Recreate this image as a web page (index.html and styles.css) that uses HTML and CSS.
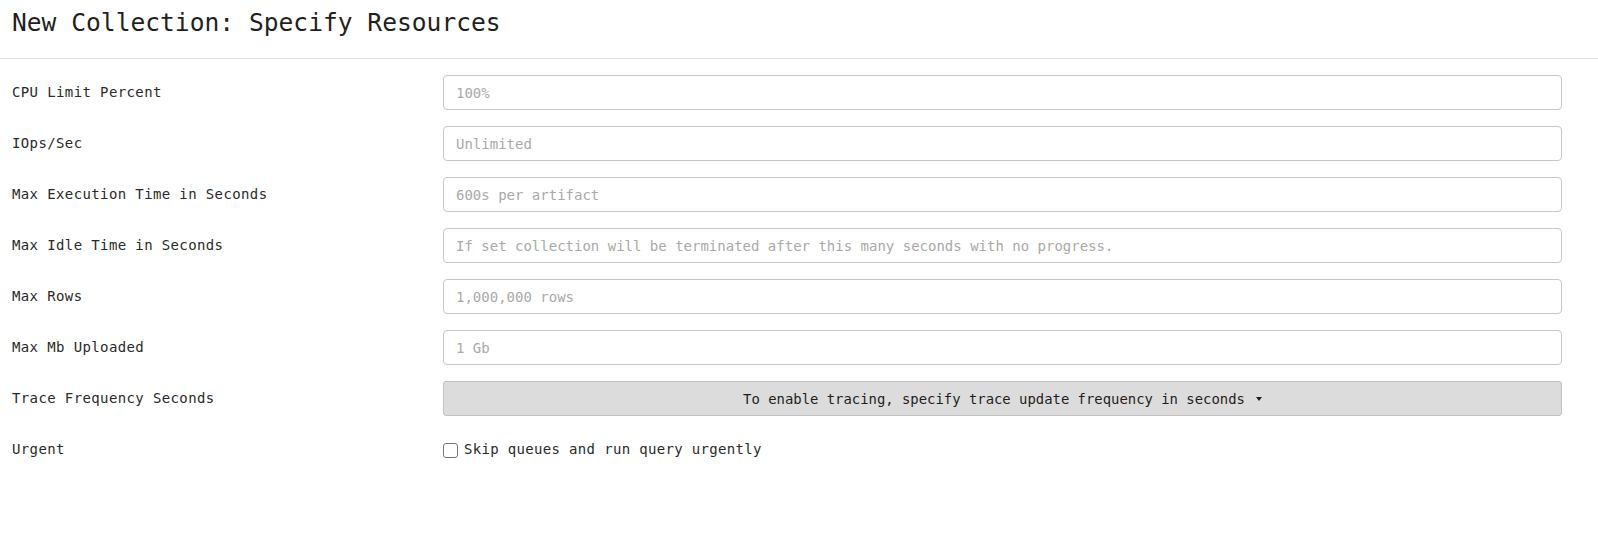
FILE: index.html
```html
<!DOCTYPE html>
<html>
<head>
<meta charset="utf-8">
<title>New Collection: Specify Resources</title>
<link rel="stylesheet" href="styles.css">
</head>
<body>
<div class="header">
  <h3 class="title">New Collection: Specify Resources</h3>
</div>
<form class="form">
  <div class="row">
    <label class="label">CPU Limit Percent</label>
    <input class="control" type="text" placeholder="100%">
  </div>
  <div class="row">
    <label class="label">IOps/Sec</label>
    <input class="control" type="text" placeholder="Unlimited">
  </div>
  <div class="row">
    <label class="label">Max Execution Time in Seconds</label>
    <input class="control" type="text" placeholder="600s per artifact">
  </div>
  <div class="row">
    <label class="label">Max Idle Time in Seconds</label>
    <input class="control" type="text" placeholder="If set collection will be terminated after this many seconds with no progress.">
  </div>
  <div class="row">
    <label class="label">Max Rows</label>
    <input class="control" type="text" placeholder="1,000,000 rows">
  </div>
  <div class="row">
    <label class="label">Max Mb Uploaded</label>
    <input class="control" type="text" placeholder="1 Gb">
  </div>
  <div class="row">
    <label class="label">Trace Frequency Seconds</label>
    <button class="dropdown" type="button">To enable tracing, specify trace update frequency in seconds<span class="caret"></span></button>
  </div>
  <div class="row">
    <label class="label">Urgent</label>
    <label class="check">
      <input class="checkbox" type="checkbox">
      <span class="check-text">Skip queues and run query urgently</span>
    </label>
  </div>
</form>
</body>
</html>
```

FILE: styles.css
```css
html, body {
  margin: 0;
  padding: 0;
  background: #ffffff;
}

body {
  font-family: "DejaVu Sans Mono", "Liberation Mono", monospace;
  color: #212529;
}

.header {
  box-sizing: border-box;
  height: 59px;
  border-bottom: 1px solid #dee2e6;
  padding: 8px 12px 0 12px;
}

.title {
  margin: 0;
  font-size: 24.6px;
  font-weight: normal;
  line-height: 29px;
  color: #1f1f1f;
}

.form {
  padding: 16px 36px 0 12px;
  margin: 0;
}

.row {
  display: grid;
  grid-template-columns: 431px 1fr;
  align-items: center;
  height: 35px;
  margin-bottom: 16px;
}

.label {
  font-size: 14px;
  letter-spacing: 0.38px;
  color: #2a2a2a;
  padding-bottom: 2px;
}

.control {
  box-sizing: border-box;
  height: 35px;
  width: 100%;
  margin: 0;
  padding: 0 12px;
  border: 1px solid #c8c8c8;
  border-radius: 4px;
  font-family: "DejaVu Sans Mono", "Liberation Mono", monospace;
  font-size: 14px;
  color: #212529;
  background: #fff;
  outline: none;
}

.control::placeholder {
  color: #a9a9a9;
}

.dropdown {
  box-sizing: border-box;
  height: 35px;
  width: 100%;
  margin: 0;
  padding: 0 12px;
  border: 1px solid #c2c2c2;
  border-radius: 3px;
  background: #dcdcdc;
  font-family: "DejaVu Sans Mono", "Liberation Mono", monospace;
  font-size: 13.9px;
  color: #1e1e1e;
  display: flex;
  align-items: center;
  justify-content: center;
}

.caret {
  display: inline-block;
  width: 0;
  height: 0;
  margin-left: 11px;
  border-top: 4px solid #1e1e1e;
  border-left: 3.5px solid transparent;
  border-right: 3.5px solid transparent;
}

.check {
  display: flex;
  align-items: center;
  gap: 6px;
}

.checkbox {
  appearance: none;
  -webkit-appearance: none;
  box-sizing: border-box;
  width: 15px;
  height: 15px;
  margin: 2px 0 0 0;
  border: 1px solid #767676;
  border-radius: 3px;
  background: #fff;
}

.check-text {
  font-size: 14px;
  letter-spacing: 0.33px;
  color: #2a2a2a;
  padding-bottom: 2px;
}
```
